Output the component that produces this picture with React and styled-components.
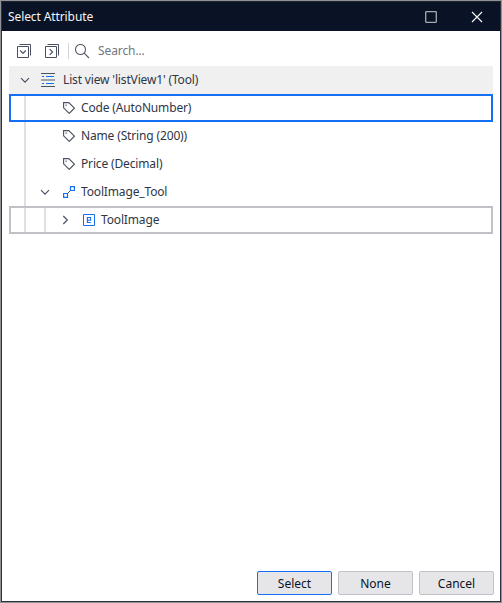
import React from "react";
import styled, { createGlobalStyle } from "styled-components";

const GlobalStyle = createGlobalStyle`
  *, *::before, *::after { box-sizing: border-box; }
  html, body, #root { height: 100%; }
  body { margin: 0; background: #fff; overflow: hidden; }
`;

const Window = styled.div`
  display: flex;
  flex-direction: column;
  height: 100%;
  border: 1px solid #8f9194;
  font: 12px "Noto Sans", "Open Sans", sans-serif;
  color: #2f3646;
`;

const Frame = styled.div`
  display: flex;
  flex-direction: column;
  flex: 1;
  border: 1px solid #2b3340;
  border-top-color: #1c2531;
  background: #fff;
`;

const TitleBar = styled.header`
  display: flex;
  align-items: center;
  height: 29px;
  flex: none;
  padding-left: 6px;
  background: #0a1325;
  color: #f4f5f7;
`;

const Label = styled.span`
  white-space: nowrap;
  line-height: 16px;
  letter-spacing: ${(p) => p.$spacing || 0}px;
`;

const WindowControls = styled.div`
  display: flex;
  margin-left: auto;
`;

const ControlButton = styled.button`
  display: flex;
  align-items: center;
  justify-content: center;
  width: 46px;
  height: 29px;
  padding: 0;
  border: 0;
  background: none;
`;

const Toolbar = styled.div`
  display: flex;
  align-items: center;
  height: 35px;
  flex: none;
  padding: 5px 0 0 15px;
`;

const ToolButton = styled.button`
  display: flex;
  width: 14px;
  height: 14px;
  margin-right: ${(p) => p.$gap}px;
  padding: 0;
  border: 0;
  background: none;
`;

const Separator = styled.i`
  width: 1px;
  height: 16px;
  margin-right: 6px;
  background: #d3d4d8;
`;

const SearchField = styled.div`
  display: flex;
  align-items: center;
  gap: 8px;
  height: 16px;
  color: #73767d;
`;

const Tree = styled.main`
  flex: 1;
  padding: 0 7px;
`;

const Row = styled.div`
  display: flex;
  align-items: center;
  height: 28px;
  background: ${(p) => (p.$header ? "#f0f0f0" : "#fff")};
  box-shadow: ${(p) => (p.$outline ? `inset 0 0 0 2px ${p.$outline}` : "none")};
`;

const Guide = styled.i`
  width: 20px;
  height: ${(p) => (p.$outlined ? 24 : 28)}px;
  flex: none;
  padding-left: 15px;

  &::before {
    content: "";
    display: block;
    width: 2px;
    height: 100%;
    background: ${(p) => (p.$visible ? "#e0e0e0" : "transparent")};
  }
`;

const Expander = styled.span`
  display: flex;
  justify-content: center;
  width: 32px;
  flex: none;
`;

const ItemIcon = styled.span`
  display: flex;
  align-items: center;
  width: ${(p) => p.$width}px;
  flex: none;
`;

const Footer = styled.footer`
  display: flex;
  justify-content: flex-end;
  gap: 6px;
  padding: 0 6px 6px 0;
`;

const Button = styled.button`
  width: 75px;
  height: 24px;
  padding: 0;
  border: 1px solid ${(p) => (p.$primary ? "#146ff5" : "#c1c2c8")};
  border-radius: 2px;
  background: #e6e6e9;
  color: #0a1325;
  font: inherit;
`;

const StackIcon = ({ d }) => (
  <svg width="14" height="14" fill="none" stroke="#4a5060">
    <path d="M.5 2.5h11v11H.5zM2.5.5h11v11" />
    <path d={d} strokeWidth="1.2" />
  </svg>
);

const SearchIcon = () => (
  <svg width="15" height="15" fill="none" stroke="#555a66" strokeWidth="1.1">
    <circle cx="5.5" cy="5.5" r="5" />
    <path d="M9.2 9.2l4.8 4.8" />
  </svg>
);

const Chevron = ({ open }) => (
  <svg width="10" height="10" fill="none" stroke="#4a5060" strokeWidth="1.2">
    <path d={open ? "M1 3.2l4 4 4-4" : "M3.3 1l4 4-4 4"} />
  </svg>
);

const ListIcon = () => (
  <svg width="14" height="14" shapeRendering="crispEdges">
    <path fill="#4a5060" d="M0 0h14v1H0zM0 13h14v1H0z" />
    <path fill="#a0a3aa" d="M0 6h14v2H0z" />
    <path fill="#146ff5" d="M1 3h2v1H1zM5 3h8v1H5zM1 10h2v1H1zM5 10h8v1H5z" />
  </svg>
);

const TagIcon = () => (
  <svg width="12" height="12" fill="none" stroke="#4a5060" strokeWidth="1.1">
    <path d="M.6.6h5.2l5.6 5.6-5.2 5.2L.6 5.8z" />
    <rect x="2.5" y="2.5" width="1.2" height="1.2" fill="#4a5060" stroke="none" />
  </svg>
);

const AssociationIcon = () => (
  <svg width="12" height="12" fill="none" stroke="#146ff5">
    <path d="M.6 7.5h3.9v3.9H.6zM7.5.6h3.9v3.9H7.5z" strokeWidth="1.2" />
    <path d="M4.7 7.3l2.6-2.6" stroke="#4a5060" />
  </svg>
);

const EntityIcon = () => (
  <svg width="12" height="12" fill="none" stroke="#146ff5">
    <path d="M.5.5h11v11H.5z" />
    <path d="M4.4 6.3h3.2V3.5H4.4v5h3.4" strokeWidth="1.1" />
  </svg>
);

const icons = { list: ListIcon, tag: TagIcon, association: AssociationIcon, entity: EntityIcon };

const rows = [
  { text: "List view 'listView1' (Tool)", icon: "list", guides: [], open: true, header: true, spacing: -0.15 },
  { text: "Code (AutoNumber)", icon: "tag", guides: [true], outline: "#146ff5", spacing: -0.15 },
  { text: "Name (String (200))", icon: "tag", guides: [true], spacing: -0.15 },
  { text: "Price (Decimal)", icon: "tag", guides: [true], spacing: -0.15 },
  { text: "ToolImage_Tool", icon: "association", guides: [true], open: true, spacing: -0.15 },
  { text: "ToolImage", icon: "entity", guides: [true, true], open: false, outline: "#c0c0c6", spacing: -0.15 },
];

function TreeRow({ row }) {
  const Icon = icons[row.icon];
  return (
    <Row $header={row.header} $outline={row.outline}>
      {row.guides.map((visible, i) => (
        <Guide key={i} $visible={visible} $outlined={Boolean(row.outline)} />
      ))}
      <Expander>{row.open !== undefined && <Chevron open={row.open} />}</Expander>
      <ItemIcon $width={row.header ? 22 : 20}>
        {row.header ? <Icon /> : <IndentedIcon><Icon /></IndentedIcon>}
      </ItemIcon>
      <Label $spacing={row.spacing}>{row.text}</Label>
    </Row>
  );
}

const IndentedIcon = styled.span`
  display: flex;
  padding-left: 2px;
`;

export default function App() {
  return (
    <Window>
      <GlobalStyle />
      <Frame>
        <TitleBar>
          <Label $spacing={-0.1}>Select Attribute</Label>
          <WindowControls>
            <ControlButton aria-label="Maximize">
              <svg width="12" height="12" fill="none" stroke="#a5a9b0" strokeWidth="1.3">
                <rect x=".7" y=".7" width="10.6" height="10.6" rx=".5" />
              </svg>
            </ControlButton>
            <ControlButton aria-label="Close">
              <svg width="12" height="12" stroke="#f5f6f8" strokeWidth="1.2">
                <path d="M1 1l10 10M11 1L1 11" />
              </svg>
            </ControlButton>
          </WindowControls>
        </TitleBar>
        <Toolbar>
          <ToolButton $gap={14} aria-label="Expand all"><StackIcon d="M3.2 6.5L6 9.3l2.8-2.8" /></ToolButton>
          <ToolButton $gap={9} aria-label="Collapse all"><StackIcon d="M4.7 5.2L7.5 8l-2.8 2.8" /></ToolButton>
          <Separator />
          <SearchField>
            <SearchIcon />
            <Label $spacing={-0.1}>Search...</Label>
          </SearchField>
        </Toolbar>
        <Tree>
          {rows.map((row) => <TreeRow key={row.text} row={row} />)}
        </Tree>
        <Footer>
          <Button $primary>Select</Button>
          <Button>None</Button>
          <Button>Cancel</Button>
        </Footer>
      </Frame>
    </Window>
  );
}
